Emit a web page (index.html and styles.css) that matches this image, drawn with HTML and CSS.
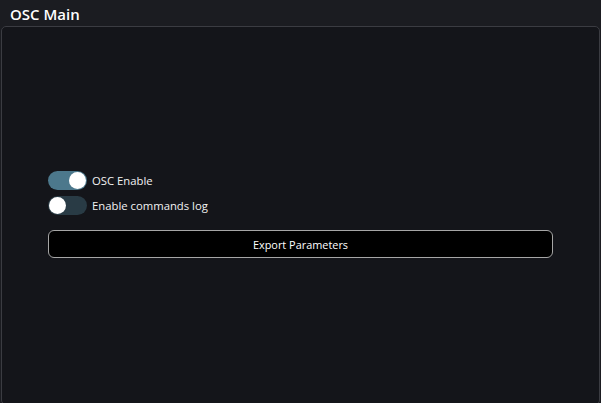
FILE: index.html
```html
<!DOCTYPE html>
<html>
<head>
<meta charset="utf-8">
<link rel="stylesheet" href="styles.css">
</head>
<body>
<div class="app">
  <div class="title">OSC Main</div>
  <div class="panel">
    <div class="content">
      <div class="row">
        <span class="toggle on"><span class="knob"></span></span>
        <span class="label">OSC Enable</span>
      </div>
      <div class="row">
        <span class="toggle off"><span class="knob"></span></span>
        <span class="label">Enable commands log</span>
      </div>
      <button class="btn">Export Parameters</button>
    </div>
  </div>
</div>
</body>
</html>
```
FILE: styles.css
```css
html, body {
  margin: 0;
  padding: 0;
  height: 100%;
  background: #1b1c21;
  font-family: "Open Sans", "Noto Sans", sans-serif;
  color: #ffffff;
  overflow: hidden;
}
.app {
  display: flex;
  flex-direction: column;
  height: 403px;
}
.title {
  height: 26px;
  padding-left: 10px;
  font-size: 15px;
  font-weight: 600;
  line-height: 28px;
  box-sizing: border-box;
}
.panel {
  flex: 1;
  margin: 0 1px -2px 1px;
  border: 1px solid #3b3c42;
  border-radius: 5px;
  background: #14151a;
  display: flex;
  flex-direction: column;
  justify-content: center;
  padding: 0 46px;
}
.content {
  display: flex;
  flex-direction: column;
  margin-top: -5px;
}
.row {
  display: flex;
  align-items: center;
  gap: 5px;
  height: 25px;
}
.toggle {
  width: 39px;
  height: 19px;
  border-radius: 10px;
  display: flex;
  align-items: center;
  padding: 0 1px;
  box-sizing: border-box;
}
.toggle.on {
  background: #4c788c;
  justify-content: flex-end;
}
.toggle.off {
  background: #293b45;
  justify-content: flex-start;
}
.knob {
  width: 17px;
  height: 17px;
  border-radius: 50%;
  background: #ffffff;
}
.label {
  font-size: 11.3px;
  color: #f2f2f2;
}
.btn {
  margin-top: 12px;
  height: 28px;
  background: #000000;
  border: 1.5px solid #a6a6a6;
  border-radius: 6px;
  color: #ffffff;
  font-family: "Open Sans", "Noto Sans", sans-serif;
  font-size: 10.9px;
  padding: 0;
}
```
